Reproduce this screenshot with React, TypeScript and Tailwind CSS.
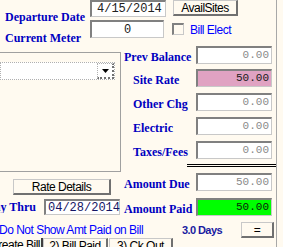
import React from "react";

const label = "font-['Liberation_Serif',serif] font-bold text-[12px] leading-none text-[#0000c0] whitespace-nowrap";
const sans = "font-['Liberation_Sans',Arial,sans-serif] text-[12px] tracking-[-0.5px] leading-none whitespace-nowrap";
const mono = "font-['Liberation_Mono',monospace] leading-none whitespace-nowrap";
const sunken = "border-t-2 border-l-2 border-b border-r border-t-[#808080] border-l-[#808080] border-b-[#c8c8c8] border-r-[#c8c8c8] border-b-dotted border-r-dotted";
const raised = "border-t border-l border-b-2 border-r-2 border-t-[#c8c8c8] border-l-[#c8c8c8] border-t-dotted border-l-dotted border-b-[#707070] border-r-[#707070]";

function Amount({ value, bg = "bg-white", color = "text-[#8a8a8a]" }: { value: string; bg?: string; color?: string }) {
    return (
        <div className={`w-[76px] h-[18px] ${sunken} ${bg} flex items-center justify-end pr-[2px]`}>
            <span className={`${mono} text-[11px] ${color}`}>{value}</span>
        </div>
    );
}

function Row({ name, value, indent = false, bg, color, className = "" }: { name: string; value: string; indent?: boolean; bg?: string; color?: string; className?: string }) {
    return (
        <div className={`flex items-center h-[18px] ${className}`}>
            <div className={`w-[72px] ${indent ? "pl-[9px]" : ""}`}>
                <span className={label}>{name}</span>
            </div>
            <Amount value={value} bg={bg} color={color} />
        </div>
    );
}

export default function App() {
    return (
        <div className="w-[283px] h-[247px] overflow-hidden bg-[#fffaf0]">
            <div className="w-[277px] h-full border-r border-[#a8a8a8]">
                {/* top rows */}
                <div className="flex items-start h-[17px]">
                    <div className="w-[90px] pl-[5px] pt-[3px]">
                        <span className={label}>Departure Date</span>
                    </div>
                    <div className={`w-[76px] h-[17px] ${sunken} bg-white flex items-center pl-[5px]`}>
                        <span className={`${mono} text-[12px] text-[#202020]`}>4/15/2014</span>
                    </div>
                    <button className={`ml-[7px] w-[65px] h-[16px] ${raised} bg-[#fffaf0] flex items-center justify-center`}>
                        <span className={`${sans} text-black`}>AvailSites</span>
                    </button>
                </div>
                <div className="flex items-start h-[18px] mt-[3px]">
                    <div className="w-[90px] pl-[5px] pt-[4px]">
                        <span className={label}>Current Meter</span>
                    </div>
                    <div className={`w-[74px] h-[18px] ${sunken} bg-white flex items-center justify-center`}>
                        <span className={`${mono} text-[12px] text-[#202020]`}>0</span>
                    </div>
                    <div className={`ml-[8px] mt-[3px] w-[12px] h-[12px] ${sunken}`} />
                    <span className={`${sans} ml-[6px] mt-[4px] text-[#0000ff]`}>Bill Elect</span>
                </div>

                {/* main area */}
                <div className="flex h-[178px]">
                    <div className="w-[124px] flex flex-col">
                        <div className="mt-[14px] w-[121px] h-[120px] border-t border-r border-b border-[#a0a0a0] pt-[9px]">
                            <div className="w-[115px] h-[18px] border border-dotted border-[#b0b0b0] bg-white flex justify-end">
                                <div className="w-[17px] h-full border-t border-l border-dotted border-[#b0b0b0] border-b-2 border-r-2 border-b-[#707070] border-r-[#707070] flex items-center justify-center">
                                    <svg width="7" height="4" viewBox="0 0 7 4">
                                        <path d="M0 0h7L3.5 4z" fill="#000" />
                                    </svg>
                                </div>
                            </div>
                        </div>
                        <button className={`mt-[7px] ml-[13px] w-[98px] h-[16px] ${raised} bg-[#fffaf0] flex items-center justify-center`}>
                            <span className={`${sans} text-black`}>Rate Details</span>
                        </button>
                        <div className="flex items-center mt-[4px] h-[16px]">
                            <div className="w-[36px] flex justify-end overflow-hidden">
                                <span className={label}>Pay Thru</span>
                            </div>
                            <div className={`ml-[8px] w-[76px] h-[16px] ${sunken} bg-white flex items-center pl-[2px]`}>
                                <span className={`${mono} text-[12px] text-[#141464]`}>04/28/2014</span>
                            </div>
                        </div>
                    </div>

                    <div className="flex flex-col flex-1">
                        <Row className="mt-[8px]" name="Prev Balance" value="0.00" />
                        <Row className="mt-[5px]" name="Site Rate" value="50.00" indent bg="bg-[#e0a2c2]" color="text-[#1a1a1a]" />
                        <Row className="mt-[6px]" name="Other Chg" value="0.00" indent />
                        <Row className="mt-[6px]" name="Electric" value="0.00" indent />
                        <Row className="mt-[6px]" name="Taxes/Fees" value="0.00" indent />
                        <div className="mt-[5px] ml-[63px] h-[4px] border-t border-b border-black" />
                        <Row className="mt-[6px]" name="Amount Due" value="50.00" />
                        <Row className="mt-[7px]" name="Amount Paid" value="50.00" bg="bg-[#00ff00]" color="text-[#0a1a0a]" />
                    </div>
                </div>

                {/* bottom row */}
                <div className="flex items-center h-[16px] mt-[6px]">
                    <span className={`${sans} -ml-[1px] text-[#0000ff]`}>Do Not Show Amt Paid on Bill</span>
                    <span className="ml-[39px] font-['Liberation_Sans',Arial,sans-serif] font-bold text-[11px] tracking-[-0.6px] leading-none text-[#1a1aa0]">3.0 Days</span>
                    <button className={`ml-[19px] w-[33px] h-[16px] ${raised} bg-[#fffaf0] flex items-center justify-center`}>
                        <span className={`${sans} text-black`}>=</span>
                    </button>
                </div>

                {/* tabs */}
                <div className="flex h-[16px]">
                    <div className="w-[43px] h-[16px] flex justify-end overflow-hidden border-b-2 border-r-2 border-[#404040] pt-[1px] pr-[1px]">
                        <span className={`${sans} text-black`}>1) Create Bill</span>
                    </div>
                    <div className={`w-[65px] h-[16px] ${raised} border-r-[#404040] flex justify-center pt-[1px]`}>
                        <span className={`${sans} text-black`}>2) Bill Paid</span>
                    </div>
                    <div className={`ml-[1px] w-[64px] h-[16px] ${raised} flex justify-center pt-[1px]`}>
                        <span className={`${sans} text-black`}>3) Ck Out</span>
                    </div>
                </div>
            </div>
        </div>
    );
}
